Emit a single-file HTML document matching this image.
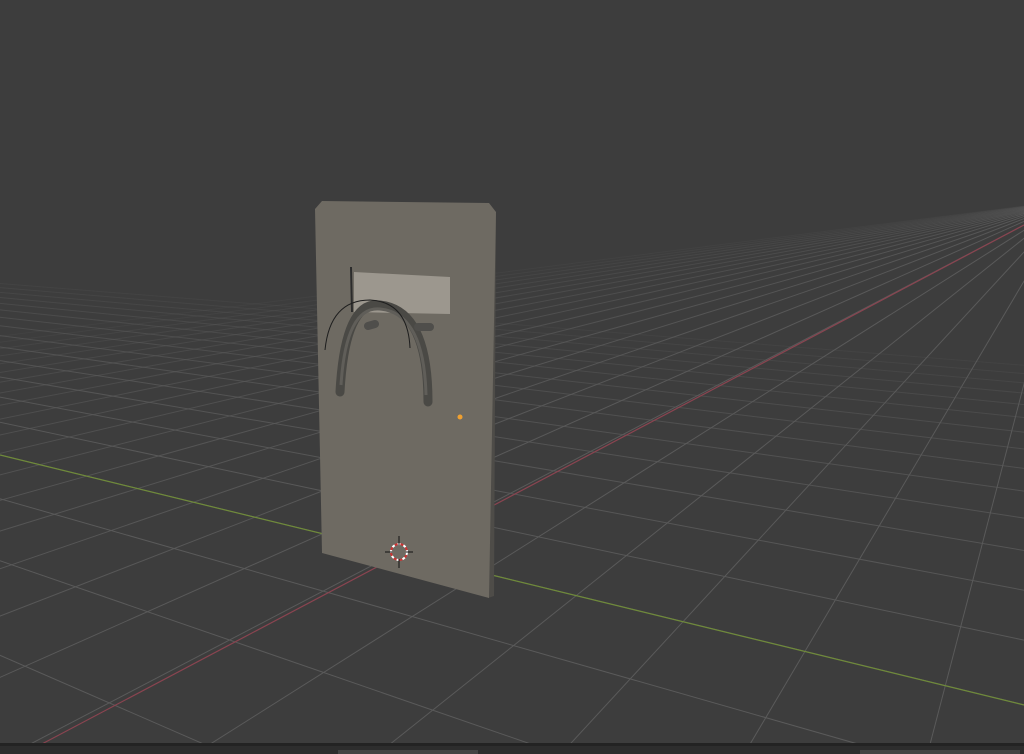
<!DOCTYPE html>
<html><head><meta charset="utf-8"><style>
html,body{margin:0;padding:0;background:#3d3d3d;width:1024px;height:754px;overflow:hidden;font-family:"Liberation Sans",sans-serif}
svg{position:absolute;left:0;top:0;display:block}
</style></head><body>
<svg id="s" width="1024" height="754" viewBox="0 0 1024 754">
<rect width="1024" height="754" fill="#3d3d3d"/>
<g id="grid" stroke-width="1"></g>
<line x1="0" y1="455" x2="1024" y2="705" stroke="#6f8a3a" stroke-width="1.2"/>
<line x1="40" y1="745" x2="1024" y2="225" stroke="#8a4450" stroke-width="1.2"/>
<!-- shield -->
<polygon points="490,208 496,212 494,596 488,598" fill="#4e4c48"/>
<polygon points="315,209 322,201 489,203 496,212 489,598 322,553" fill="#6e6a62"/>
<polygon points="354,272 450,277 450,314 354,312" fill="#9c978e"/>
<line x1="351" y1="267" x2="352" y2="312" stroke="#2c2c2c" stroke-width="2"/>
<path d="M340 392 Q345 300 380 305 Q428 310 428 402" fill="none" stroke="#4a4945" stroke-width="9" stroke-linecap="round"/>
<path d="M341 385 Q346 306 380 309 Q424 313 426 395" fill="none" stroke="#605e59" stroke-width="3"/>
<path d="M368 326 L375 324 M418 327 L430 327" stroke="#4f4e4b" stroke-width="8" stroke-linecap="round"/>
<path d="M325 350 Q330 300 370 300 Q408 302 410 348" fill="none" stroke="#1e1e1e" stroke-width="1"/>
<circle cx="460" cy="417" r="2.5" fill="#f0a030"/>
<circle cx="399" cy="552" r="8" fill="none" stroke="#fff" stroke-width="2" stroke-dasharray="3 3"/>
<circle cx="399" cy="552" r="8" fill="none" stroke="#c33" stroke-width="2" stroke-dasharray="3 3" stroke-dashoffset="3"/>
<path d="M399 536 V545 M399 559 V568 M385 552 H392 M406 552 H413" stroke="#111" stroke-width="1"/>
<!-- bottom bar -->
<rect x="0" y="743" width="1024" height="3" fill="#232323"/>
<rect x="0" y="746" width="1024" height="8" fill="#2d2d2d"/>
<rect x="338" y="750" width="140" height="4" fill="#444"/>
<rect x="860" y="750" width="160" height="4" fill="#444"/>
</svg>
<script>
var g=document.getElementById('grid'),ns='http://www.w3.org/2000/svg';
var O=[398,552],VR=[1072,200],VG=[-1045,200];
function pt(V,c,k){var f=1/(1+k*c);return [V[0]+(O[0]-V[0])*f,V[1]+(O[1]-V[1])*f];}
function ln(a,b,op){var l=document.createElementNS(ns,'line');
 var dx=b[0]-a[0],dy=b[1]-a[1];
 l.setAttribute('x1',a[0]);l.setAttribute('y1',a[1]);
 l.setAttribute('x2',a[0]+dx*50);l.setAttribute('y2',a[1]+dy*50);
 l.setAttribute('stroke','#5a5a5a');l.setAttribute('stroke-opacity',op);g.appendChild(l);}
for(var k=-12;k<=18;k++){if(1+k*0.055<=0.05)continue;var p=pt(VG,0.055,k);ln(VR,p,Math.max(0.15,Math.min(1,1-k/22)));}
for(var k=-9;k<=14;k++){if(1+k*0.1<=0.05)continue;var p=pt(VR,0.1,k);ln(VG,p,Math.max(0.15,Math.min(1,1-k/18)));}
</script>
</body></html>
